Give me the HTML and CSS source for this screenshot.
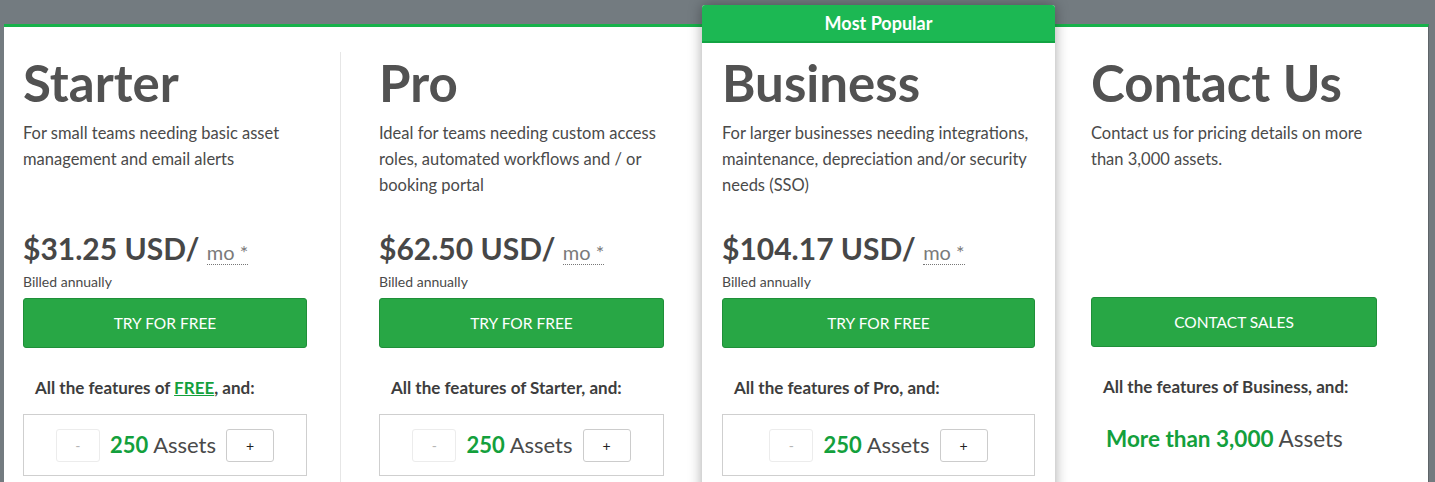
FILE: index.html
```html
<!DOCTYPE html>
<html lang="en">
<head>
<meta charset="utf-8">
<title>Pricing</title>
<link rel="stylesheet" href="styles.css">
</head>
<body>
<div class="page">
  <div class="panel">
    <div class="plan plan-starter">
      <h2 class="plan-title">Starter</h2>
      <p class="plan-desc">For small teams needing basic asset management and email alerts</p>
      <div class="price-block">
        <div class="price">$31.25 USD/ <abbr class="per">mo *</abbr></div>
        <div class="billed">Billed annually</div>
      </div>
      <a class="cta">TRY FOR FREE</a>
      <p class="features">All the features of <a class="free-link">FREE</a>, and:</p>
      <div class="assets-box">
        <span class="step step-minus">-</span>
        <span class="assets"><b>250</b> Assets</span>
        <span class="step step-plus">+</span>
      </div>
    </div>
    <div class="plan plan-pro">
      <h2 class="plan-title">Pro</h2>
      <p class="plan-desc">Ideal for teams needing custom access roles, automated workflows and / or booking portal</p>
      <div class="price-block">
        <div class="price">$62.50 USD/ <abbr class="per">mo *</abbr></div>
        <div class="billed">Billed annually</div>
      </div>
      <a class="cta">TRY FOR FREE</a>
      <p class="features">All the features of Starter, and:</p>
      <div class="assets-box">
        <span class="step step-minus">-</span>
        <span class="assets"><b>250</b> Assets</span>
        <span class="step step-plus">+</span>
      </div>
    </div>
    <div class="plan plan-business">
      <div class="popular">Most Popular</div>
      <div class="business-body">
        <h2 class="plan-title">Business</h2>
        <p class="plan-desc">For larger businesses needing integrations, maintenance, depreciation and/or security needs (SSO)</p>
        <div class="price-block">
          <div class="price">$104.17 USD/ <abbr class="per">mo *</abbr></div>
          <div class="billed">Billed annually</div>
        </div>
        <a class="cta">TRY FOR FREE</a>
        <p class="features">All the features of Pro, and:</p>
        <div class="assets-box">
          <span class="step step-minus">-</span>
          <span class="assets"><b>250</b> Assets</span>
          <span class="step step-plus">+</span>
        </div>
      </div>
    </div>
    <div class="plan plan-contact">
      <h2 class="plan-title">Contact Us</h2>
      <p class="plan-desc">Contact us for pricing details on more than 3,000 assets.</p>
      <div class="price-block"></div>
      <a class="cta cta-contact">CONTACT SALES</a>
      <p class="features">All the features of Business, and:</p>
      <div class="assets-more"><b>More than 3,000</b> Assets</div>
    </div>
  </div>
</div>
</body>
</html>
```
FILE: styles.css
```css
html, body {
  margin: 0;
  padding: 0;
}
body {
  background: #737b80;
  font-family: Lato, "Noto Sans", "Liberation Sans", sans-serif;
  color: #4d4d4d;
  overflow: hidden;
  height: 482px;
}
.page {
  padding: 24px 6px 0 4px;
}
.panel {
  display: flex;
  background: #ffffff;
  border-top: 3px solid #17b14a;
  border-right: 1px solid #5e6468;
  padding-top: 25px;
  min-height: 520px;
  box-sizing: border-box;
}
.plan {
  flex: none;
  box-sizing: border-box;
}
.plan-starter {
  width: 337px;
  padding: 0 33px 0 19px;
  border-right: 1px solid #e6e6e6;
}
.plan-pro {
  width: 361px;
  padding: 0 38px 0 38px;
}
.plan-business {
  width: 353px;
  margin-top: -47px;
  background: #ffffff;
  box-shadow: 0 0 14px rgba(0, 0, 0, 0.35);
  position: relative;
  z-index: 1;
  border-radius: 3px 3px 0 0;
}
.plan-contact {
  width: 374px;
  padding: 0 52px 0 36px;
}
.popular {
  height: 38px;
  box-sizing: border-box;
  background: #1cb853;
  border-bottom: 2px solid #12a443;
  border-radius: 3px 3px 0 0;
  color: #ffffff;
  font-weight: 700;
  font-size: 18px;
  line-height: 37px;
  text-align: center;
}
.business-body {
  padding: 9px 20px 0 20px;
}
.plan-title {
  margin: 0;
  font-size: 51px;
  line-height: 61px;
  font-weight: 700;
  color: #525252;
  white-space: nowrap;
}
.plan-desc {
  margin: 7px 0 0 0;
  font-size: 16.5px;
  line-height: 26px;
  min-height: 78px;
  color: #4a4a4a;
}
.price-block {
  margin-top: 32px;
  height: 57px;
}
.price {
  font-size: 30px;
  line-height: 36px;
  font-weight: 700;
  color: #474747;
  white-space: nowrap;
}
.per {
  font-size: 20px;
  font-weight: 400;
  color: #7a7a7a;
  text-decoration: none;
  border-bottom: 1px dotted #777;
}
.billed {
  margin-top: 3px;
  font-size: 14px;
  line-height: 18px;
  color: #4a4a4a;
}
.cta {
  display: block;
  margin-top: 11px;
  height: 50px;
  box-sizing: border-box;
  background: #28a745;
  border: 1px solid #1f8f39;
  border-radius: 3px;
  color: #ffffff;
  font-size: 15.5px;
  line-height: 48px;
  text-align: center;
}
.cta-contact {
  margin-top: 10px;
}
.features {
  margin: 29px 0 0 0;
  padding-left: 12px;
  font-size: 17px;
  line-height: 22px;
  font-weight: 700;
  color: #3d3d3d;
  white-space: nowrap;
}
.free-link {
  color: #13a03c;
  text-decoration: underline;
}
.assets-box {
  margin-top: 15px;
  height: 62px;
  box-sizing: border-box;
  border: 1px solid #cfcfcf;
  display: flex;
  align-items: center;
  justify-content: center;
  gap: 10px;
}
.step {
  height: 33px;
  box-sizing: border-box;
  border-radius: 3px;
  display: flex;
  align-items: center;
  justify-content: center;
  font-size: 14px;
}
.step-minus {
  width: 44px;
  border: 1px solid #ececec;
  color: #b5b5b5;
}
.step-plus {
  width: 48px;
  border: 1px solid #cccccc;
  color: #222222;
}
.assets {
  font-size: 22px;
  line-height: 30px;
  color: #4a4a4a;
}
.assets b, .assets-more b {
  color: #13a03c;
  font-weight: 700;
}
.assets-more {
  margin-top: 26px;
  padding-left: 15px;
  font-size: 22.5px;
  line-height: 30px;
  color: #4a4a4a;
  white-space: nowrap;
}
```
